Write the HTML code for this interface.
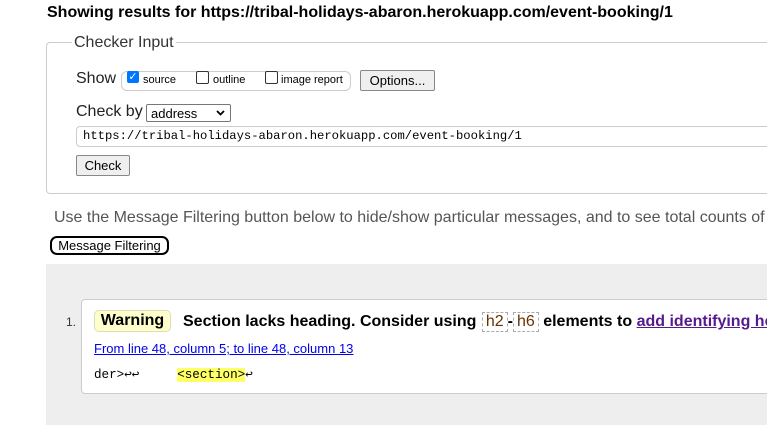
<!DOCTYPE html>
<html><head><style>
body{margin:0;width:767px;height:425px;overflow:hidden;background:#fff;font-family:"Liberation Sans",Arial,sans-serif;color:#000}
#w{position:relative;width:767px;height:425px;overflow:hidden}
.a{position:absolute;white-space:nowrap}
.mono{font-family:"Liberation Mono",monospace}
.cb{display:inline-block;width:11px;height:11px;border:1px solid #333;border-radius:2px;background:#fff}
</style></head><body><div id="w">
<div class="a" style="left:47px;top:4px;font-size:16px;font-weight:bold">Showing results for https://tribal-holidays-abaron.herokuapp.com/event-booking/1</div>
<div class="a" style="left:46px;top:42px;width:740px;height:150px;border:1px solid #ccc;border-radius:4px"></div>
<div class="a" style="left:72px;top:34px;font-size:16px;background:#fff;padding:0 2px;color:#333">Checker Input</div>
<div class="a" style="left:76px;top:70px;font-size:16px;color:#222">Show</div>
<div class="a" style="left:121px;top:71px;width:228px;height:18px;border:1px solid #ccc;border-radius:6px"></div>
<div class="a" style="left:127px;top:71px;width:12px;height:12px;background:#0075ff;border-radius:2px;color:#fff;font-size:11px;line-height:12px;text-align:center">✓</div>
<div class="a" style="left:143px;top:74px;font-size:11px">source</div>
<div class="a cb" style="left:196px;top:71px"></div>
<div class="a" style="left:213px;top:74px;font-size:11px">outline</div>
<div class="a cb" style="left:265px;top:71px"></div>
<div class="a" style="left:281px;top:74px;font-size:11px">image report</div>
<div class="a" style="left:360px;top:70px;width:73px;height:19px;border:1px solid #888;border-radius:2px;background:#efefef;font-size:13px;text-align:center;line-height:19px">Options...</div>
<div class="a" style="left:76px;top:103px;font-size:16px;color:#222">Check by</div>
<div class="a" style="left:146px;top:104px;width:85px;height:18px;border:1px solid #777;border-radius:2px;font-size:13px;line-height:17px;padding-left:4px;box-sizing:border-box">address<svg style="position:absolute;right:5px;top:5px" width="9" height="6"><path d="M1 1l3.5 3.5L8 1" stroke="#000" stroke-width="1.8" fill="none"/></svg></div>
<div class="a mono" style="left:76px;top:126px;width:720px;height:19px;border:1px solid #ccc;border-radius:4px;font-size:12.2px;line-height:19px;padding-left:6px">https://tribal-holidays-abaron.herokuapp.com/event-booking/1</div>
<div class="a" style="left:76px;top:155px;width:52px;height:19px;border:1px solid #888;border-radius:2px;background:#efefef;font-size:13px;text-align:center;line-height:19px">Check</div>
<div class="a" style="left:54px;top:209px;font-size:16px;color:#555">Use the Message Filtering button below to hide/show particular messages, and to see total counts of</div>
<div class="a" style="left:50px;top:236px;width:115px;height:15px;border:2px solid #000;border-radius:7px;font-size:13px;text-align:center;line-height:15px">Message Filtering</div>
<div class="a" style="left:46px;top:264px;width:730px;height:161px;background:#eee"></div>
<div class="a" style="left:81px;top:299px;width:700px;height:93px;background:#fff;border:1px solid #ccc;border-radius:4px"></div>
<div class="a" style="left:66px;top:315px;font-size:12px;color:#333">1.</div>
<div class="a" style="left:94px;top:310px;width:75px;height:20px;background:#ffc;border:1px solid #ddb;border-radius:5px;font-size:16px;font-weight:bold;text-align:center;line-height:20px">Warning</div>
<div class="a" style="left:183px;top:312px;font-size:16px;font-weight:bold">Section lacks heading. Consider using <span style="display:inline-block;border:1px dashed #aaa;font-weight:normal;color:#630;padding:0 3px;margin-left:1px">h2</span>-<span style="display:inline-block;border:1px dashed #aaa;font-weight:normal;color:#630;padding:0 3px">h6</span> elements to <span style="color:#551a8b;text-decoration:underline">add identifying headings</span></div>
<div class="a" style="left:94px;top:341px;font-size:13px;color:#00e;text-decoration:underline">From line 48, column 5; to line 48, column 13</div>
<div class="a mono" style="left:94px;top:366px;font-size:12.6px">der>↩↩&nbsp;&nbsp;&nbsp;&nbsp;&nbsp;<span style="background:#ff6">&lt;section&gt;</span>↩</div>
</div></body></html>
